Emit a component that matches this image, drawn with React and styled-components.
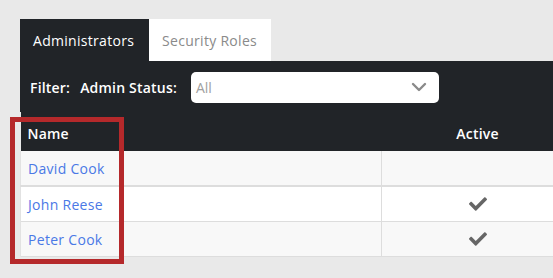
import React from "react";
import styled, { createGlobalStyle } from "styled-components";
import { FaCheck } from "react-icons/fa";

const GlobalStyle = createGlobalStyle`
  html, body {
    margin: 0;
    padding: 0;
    background: #e9e9e9;
    overflow: hidden;
    font-family: "Open Sans", "Noto Sans", sans-serif;
  }
  * { box-sizing: border-box; }
`;

const admins = [
  { name: "David Cook", active: false },
  { name: "John Reese", active: true },
  { name: "Peter Cook", active: true },
];

const App = () => {
  return (
    <>
      <GlobalStyle />
      <Page>
        <Panel>
          <TabBar>
            <Tab $active>Administrators</Tab>
            <Tab>Security Roles</Tab>
          </TabBar>
          <FilterBar>
            <Label>Filter:</Label>
            <Label>Admin Status:</Label>
            <Select>
              <span>All</span>
              <svg width="16" height="10" viewBox="0 0 16 10">
                <path d="M2 2 L8 8 L14 2" fill="none" stroke="#8a8a8a" strokeWidth="2.4" strokeLinecap="round" strokeLinejoin="round" />
              </svg>
            </Select>
          </FilterBar>
          <Table>
            <colgroup>
              <col style={{ width: "361px" }} />
              <col style={{ width: "192px" }} />
            </colgroup>
            <thead>
              <tr>
                <Th>Name</Th>
                <Th $center>Active</Th>
              </tr>
            </thead>
            <tbody>
              {admins.map((a, i) => (
                <Row key={a.name} $odd={i % 2 === 0} $first={i === 0}>
                  <Td>
                    <NameLink href="#">{a.name}</NameLink>
                  </Td>
                  <Td $center>{a.active ? <CheckIcon /> : null}</Td>
                </Row>
              ))}
            </tbody>
          </Table>
        </Panel>
        <Highlight />
      </Page>
    </>
  );
};

export default App;

const Page = styled.div`
  position: relative;
  padding: 19px 0 0 20px;
  height: 278px;
`;

const Panel = styled.div`
  width: 553px;
`;

const TabBar = styled.div`
  display: flex;
  height: 42px;
`;

const Tab = styled.div`
  display: flex;
  align-items: center;
  padding: 1px 13px 0;
  font-size: 14px;
  letter-spacing: 0.3px;
  background: ${(p) => (p.$active ? "#212428" : "#fff")};
  color: ${(p) => (p.$active ? "#fff" : "#8a8a8a")};
  width: ${(p) => (p.$active ? "129px" : "122px")};
`;

const FilterBar = styled.div`
  display: flex;
  align-items: center;
  background: #212428;
  height: 51px;
  padding: 1px 0 0 10px;
  gap: 10px;
`;

const Label = styled.span`
  color: #fff;
  font-size: 14px;
  font-weight: 600;
  letter-spacing: 0.2px;
`;

const Select = styled.div`
  margin-left: 4px;
  width: 248px;
  height: 31px;
  background: #fff;
  border-radius: 5px;
  display: flex;
  align-items: center;
  justify-content: space-between;
  padding: 0 12px 0 5px;
  font-size: 14px;
  color: #a0a0a0;
`;

const Table = styled.table`
  table-layout: fixed;
  width: 553px;
  border-collapse: collapse;
  font-size: 14px;
`;

const Th = styled.th`
  background: #212428;
  color: #fff;
  font-weight: 600;
  height: 39px;
  padding: 3px 7px 0;
  letter-spacing: 0.2px;
  text-align: ${(p) => (p.$center ? "center" : "left")};
`;

const Row = styled.tr`
  background: ${(p) => (p.$odd ? "#f8f8f8" : "#fff")};
  border-bottom: ${(p) => (p.$first ? "2px" : "1px")} solid #dddddd;
`;

const Td = styled.td`
  height: 35px;
  padding: 1px 7px 0;
  border-left: 1px solid #dddddd;
  vertical-align: middle;
  text-align: ${(p) => (p.$center ? "center" : "left")};
  &:first-child {
    border-left: 1px solid #e2e2e2;
  }
`;

const NameLink = styled.a`
  color: #4a78e6;
  text-decoration: none;
  font-size: 14px;
  letter-spacing: 0.3px;
`;

const CheckIcon = styled(FaCheck)`
  color: #666;
  font-size: 18px;
  display: block;
  margin: 0 auto;
`;

const Highlight = styled.div`
  position: absolute;
  left: 10px;
  top: 117px;
  width: 114px;
  height: 147px;
  border: 5px solid #b5292b;
  pointer-events: none;
`;
